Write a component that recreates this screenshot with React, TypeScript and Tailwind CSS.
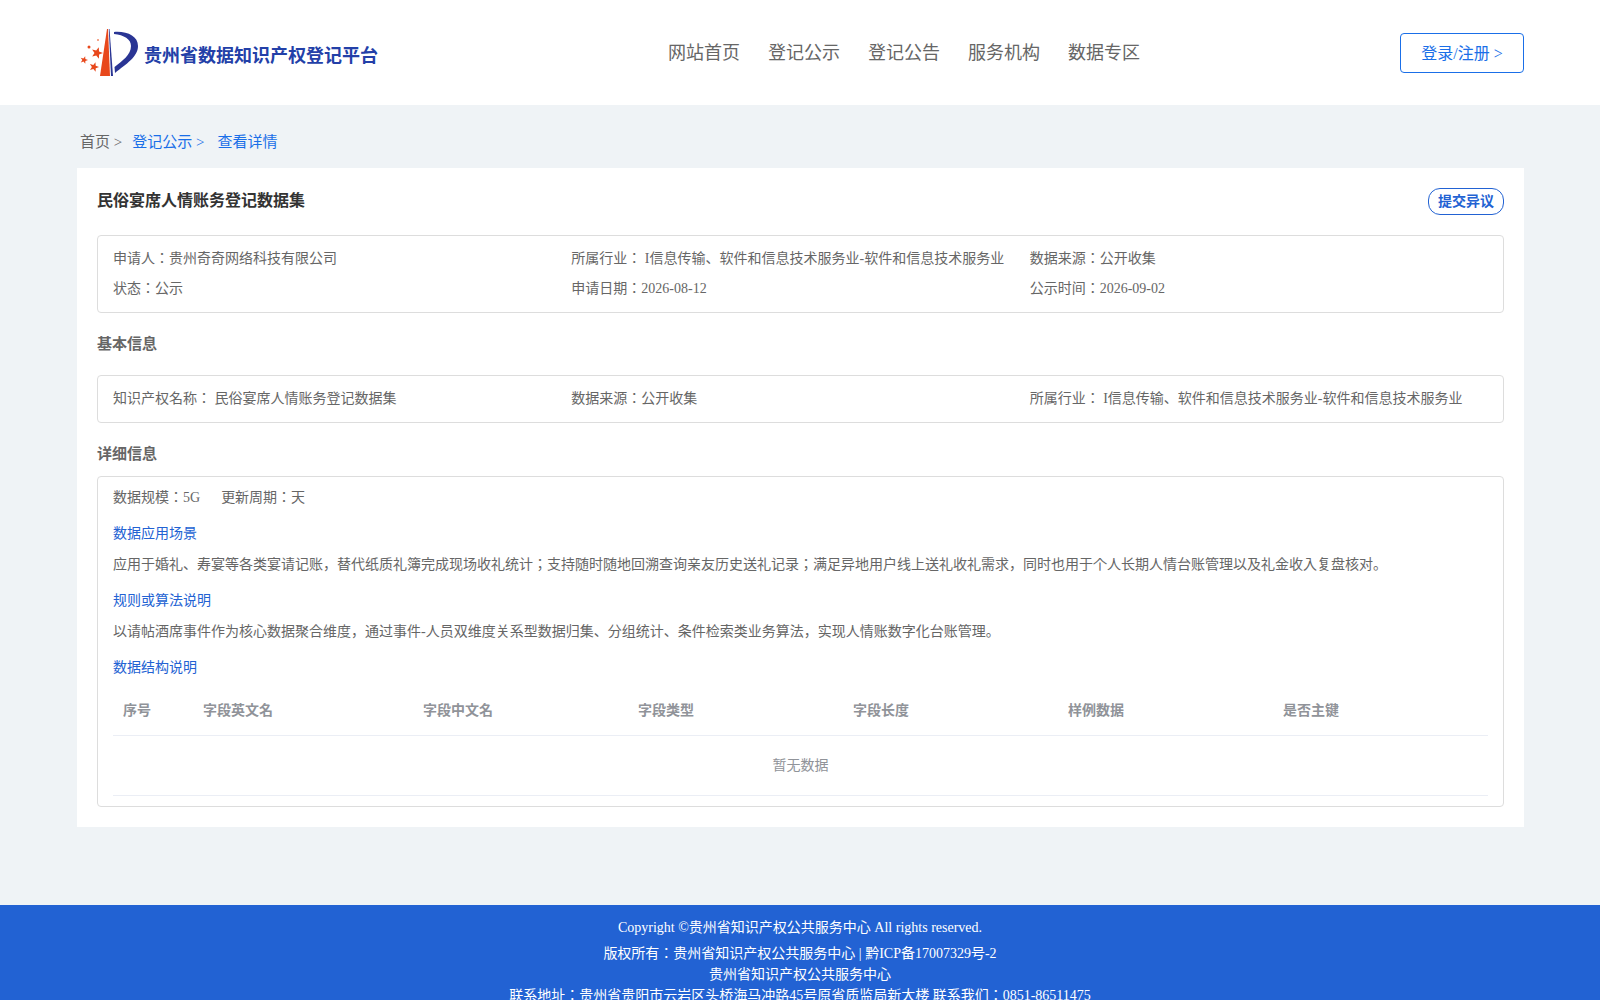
import React from "react";

const navItems = ["网站首页", "登记公示", "登记公告", "服务机构", "数据专区"];
const columns = ["序号", "字段英文名", "字段中文名", "字段类型", "字段长度", "样例数据", "是否主键"];

function Star({ cx, cy, r }: { cx: number; cy: number; r: number }) {
  const pts = [];
  for (let i = 0; i < 10; i++) {
    const rad = i % 2 === 0 ? r : r * 0.42;
    const a = (Math.PI / 5) * i - Math.PI / 2 + 0.3;
    pts.push(`${(cx + rad * Math.cos(a)).toFixed(2)},${(cy + rad * Math.sin(a)).toFixed(2)}`);
  }
  return <polygon points={pts.join(" ")} fill="#e8481c" />;
}

// traced from the reference: three stars, orange stripe, navy P
function Logo() {
  return (
    <svg width="58" height="50" viewBox="0 0 58 50" className="shrink-0">
      <Star cx={4} cy={32} r={4} />
      <Star cx={17} cy={25} r={6} />
      <Star cx={14} cy={39} r={5} />
      <circle cx={9} cy={19} r={1.5} fill="#e8481c" />
      <circle cx={18} cy={12} r={1} fill="#f08a68" />
      <path d="M27 1 L20 48 L30 48 L28 1 Z" fill="#e8481c" />
      <path d="M29.5 1 L33 48 L31 48 L28.8 1 Z" fill="#2a3594" />
      <path
        d="M34 4 C47 3 58 8 58 18 C58 29 46 36 35 45 L34.5 39 C42 33 51 27 51 18 C51 11 44 7 34 6 Z"
        fill="#2a3594"
      />
    </svg>
  );
}

function Field({ label, value, gap }: { label: string; value: string; gap?: boolean }) {
  return (
    <div>
      {label}：{gap ? " " : ""}
      {value}
    </div>
  );
}

export default function App() {
  return (
    <div
      className="min-h-screen bg-[#eff3f6] text-sm text-[#666]"
      style={{ fontFamily: '"Liberation Serif", "Noto Sans CJK JP", serif' }}
    >
      <header className="h-[105px] bg-white pl-[77px] pr-[76px] flex items-start justify-between">
        <div className="flex items-center gap-[6px] pt-[28px] pl-[3px] w-[331px]">
          <Logo />
          <span className="text-lg font-bold text-[#2340a8] pt-[5px]">贵州省数据知识产权登记平台</span>
        </div>
        <nav className="flex gap-7 pt-[40px] text-lg leading-[26px] text-[#666]">
          {navItems.map((n) => (
            <a key={n}>{n}</a>
          ))}
        </nav>
        <button className="mt-[33px] w-[124px] h-10 pt-[2px] border border-[#1a6fe8] rounded text-base text-[#1a6fe8]">
          登录/注册 &gt;
        </button>
      </header>

      <main className="pl-[77px] pr-[76px] pb-[78px]">
        <div className="h-[63px] pl-[3px] flex items-center pt-[12px] text-[15px]">
          <span>首页 &gt;</span>
          <span className="ml-[10px] text-[#1a6fe8]">登记公示 &gt;</span>
          <span className="ml-[13px] text-[#1a6fe8]">查看详情</span>
        </div>

        <section className="bg-white px-5 pt-5 pb-5 h-[659px]">
          <div className="flex items-start justify-between h-[47px]">
            <h1 className="text-base font-bold text-[#333] leading-6 pt-px">民俗宴席人情账务登记数据集</h1>
            <button className="h-[27px] px-[9px] border border-[#2262d3] rounded-xl font-bold text-[#2262d3] leading-none">
              提交异议
            </button>
          </div>

          <div className="border border-[#ddd] rounded-sm h-[78px] px-[15px] pt-[8px] grid grid-cols-3 grid-rows-[30px_30px] items-center">
            <Field label="申请人" value="贵州奇奇网络科技有限公司" />
            <Field label="所属行业" value="I信息传输、软件和信息技术服务业-软件和信息技术服务业" gap />
            <Field label="数据来源" value="公开收集" />
            <Field label="状态" value="公示" />
            <Field label="申请日期" value="2026-08-12" />
            <Field label="公示时间" value="2026-09-02" />
          </div>

          <h2 className="mt-5 mb-5 h-[22px] text-[15px] font-bold leading-[22px]">基本信息</h2>

          <div className="border border-[#ddd] rounded-sm h-12 px-[15px] grid grid-cols-3 items-center">
            <Field label="知识产权名称" value="民俗宴席人情账务登记数据集" gap />
            <Field label="数据来源" value="公开收集" />
            <Field label="所属行业" value="I信息传输、软件和信息技术服务业-软件和信息技术服务业" gap />
          </div>

          <h2 className="mt-5 mb-[11px] h-[22px] text-[15px] font-bold leading-[22px]">详细信息</h2>

          <div className="border border-[#ddd] rounded-sm h-[331px] px-[15px]">
            <div className="flex gap-[21px] h-[42px] items-center">
              <span>数据规模：5G</span>
              <span>更新周期：天</span>
            </div>
            <h3 className="h-8 leading-[30px] text-[#2262d3]">数据应用场景</h3>
            <p className="h-[35px] leading-7">
              应用于婚礼、寿宴等各类宴请记账，替代纸质礼簿完成现场收礼统计；支持随时随地回溯查询亲友历史送礼记录；满足异地用户线上送礼收礼需求，同时也用于个人长期人情台账管理以及礼金收入复盘核对。
            </p>
            <h3 className="h-8 leading-[30px] text-[#2262d3]">规则或算法说明</h3>
            <p className="h-[35px] leading-7">
              以请帖酒席事件作为核心数据聚合维度，通过事件-人员双维度关系型数据归集、分组统计、条件检索类业务算法，实现人情账数字化台账管理。
            </p>
            <h3 className="h-8 leading-[30px] text-[#2262d3]">数据结构说明</h3>

            <div className="mt-[2px] grid grid-cols-[80px_220px_repeat(5,1fr)] h-[49px] items-center border-b border-[#ebeef5] font-bold text-[#909399]">
              {columns.map((c) => (
                <div key={c} className="px-[10px]">
                  {c}
                </div>
              ))}
            </div>
            <div className="h-[60px] flex items-center justify-center border-b border-[#ebeef5] text-[#909399]">
              暂无数据
            </div>
          </div>
        </section>
      </main>

      <footer className="bg-[#2262d3] text-white text-center pt-[13px] pb-[10px]">
        <p className="leading-[20px] mb-[5px]">Copyright ©贵州省知识产权公共服务中心 All rights reserved.</p>
        <p className="leading-[21px]">版权所有：贵州省知识产权公共服务中心 | 黔ICP备17007329号-2</p>
        <p className="leading-[21px]">贵州省知识产权公共服务中心</p>
        <p className="leading-[21px]">联系地址：贵州省贵阳市云岩区头桥海马冲路45号原省质监局新大楼 联系我们：0851-86511475</p>
      </footer>
    </div>
  );
}
